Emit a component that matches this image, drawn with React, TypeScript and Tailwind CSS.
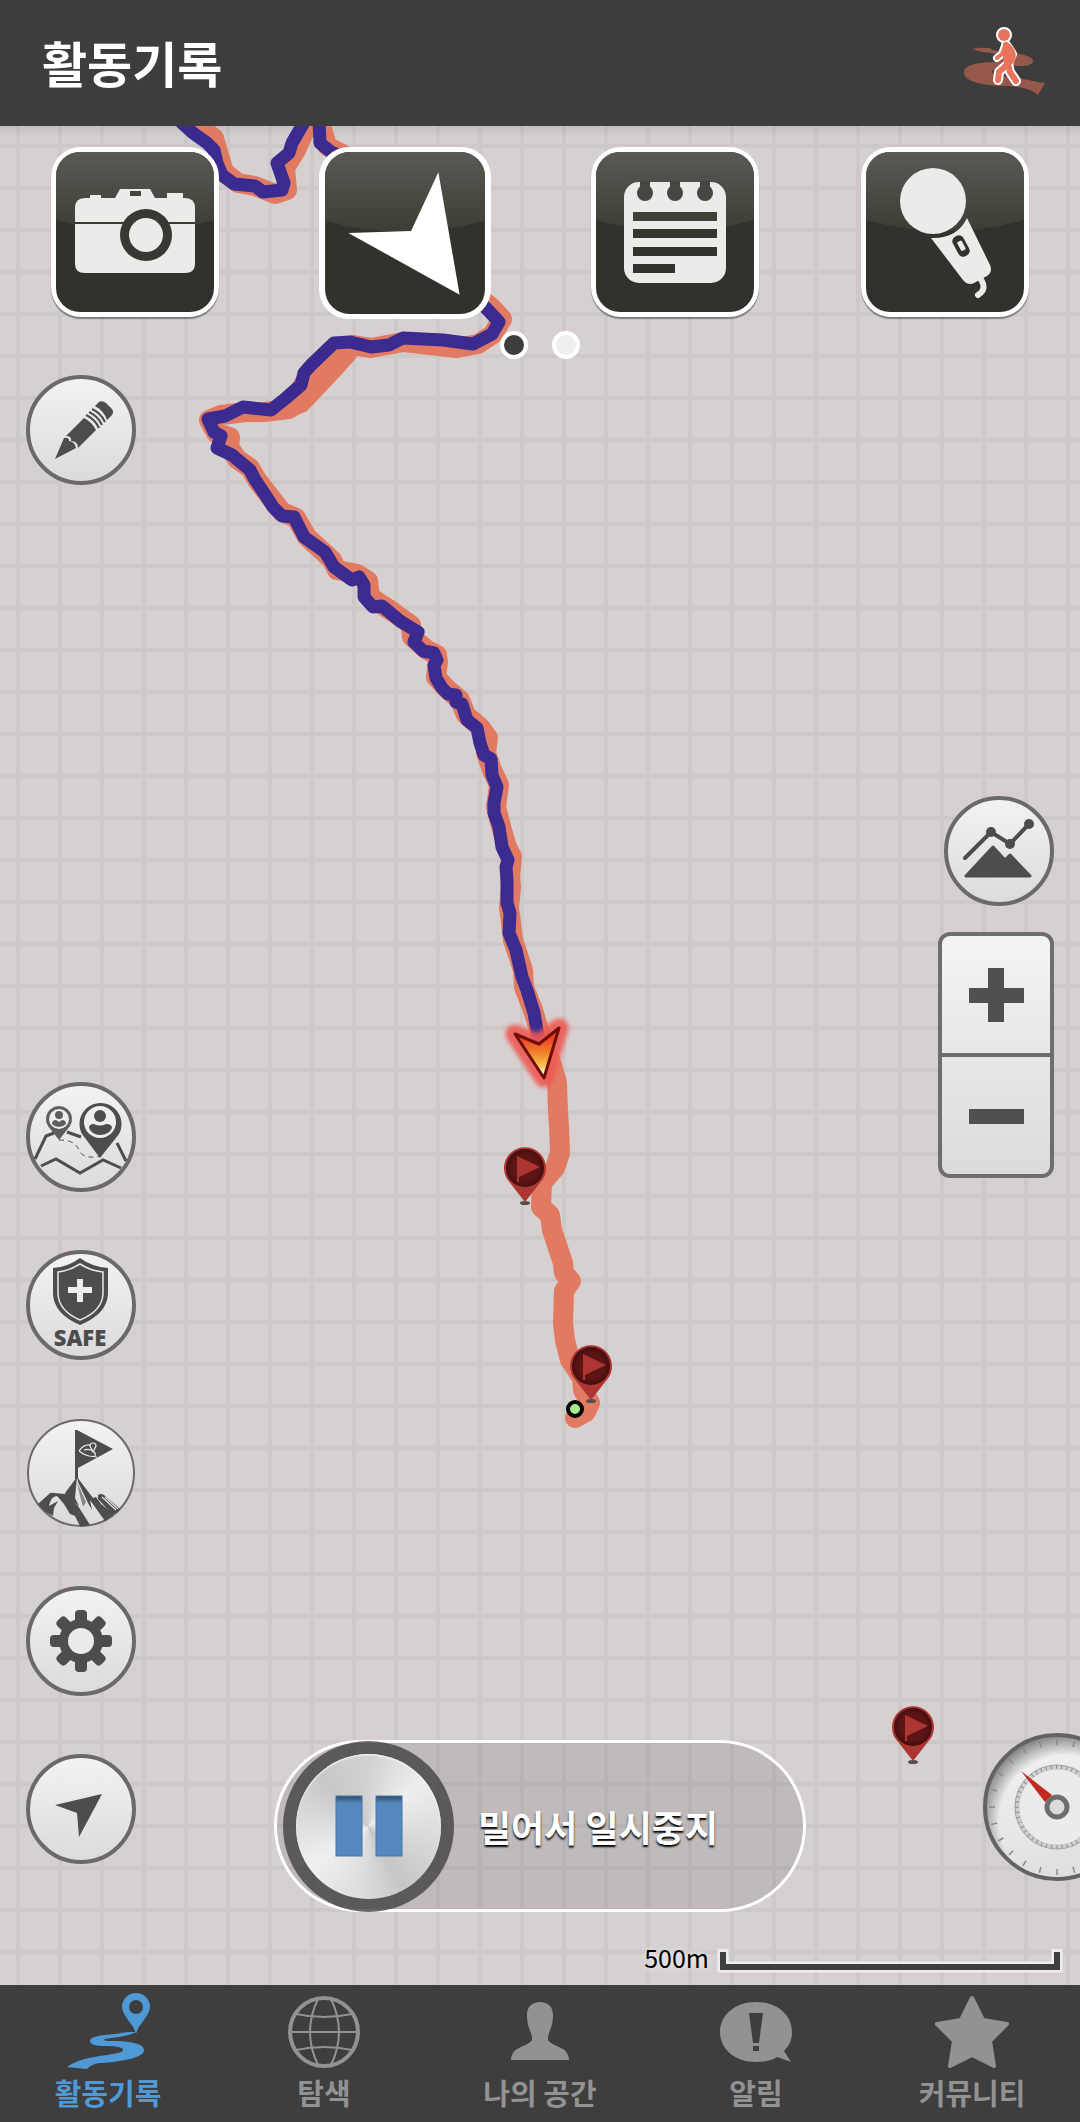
import type { ReactNode } from "react";

const ROUTE_TOP = "M195 124 L214 138 L218 152 L224 172 L238 183 L255 186 L275 194 L287 190 L285 168 L296 150 L305 130 L312 120 L321 125 L327 146 L344 155";
const ROUTE =
  "M470 290 L492 308 L502 319 L493 334 L478 344 L457 348 L403 342 L371 348 L352 345 L332 365 L303 398 L289 409 L264 412 L246 412 L221 415 L209 420 L216 433 L230 437 L229 447 L237 459 L250 468 L257 480 L275 503 L282 512 L296 518 L307 537 L332 560 L337 570 L357 574 L368 581 L370 597 L393 612 L411 625 L412 637 L427 650 L437 655 L438 662 L436 677 L447 689 L460 700 L466 715 L480 727 L488 738 L486 753 L492 770 L499 785 L496 807 L502 830 L507 847 L512 857 L510 877 L511 887 L509 907 L511 923 L513 940 L523 970 L524 987 L533 1010 L542 1040 L552 1065 L557 1083 L558 1110 L559 1127 L560 1153 L555 1168 L542 1183 L541 1207 L550 1215 L552 1230 L563 1263 L564 1273 L571 1281 L564 1291 L563 1323 L565 1340 L570 1360 L582 1378 L583 1390 L590 1403 L586 1412 L575 1418";
const TRACK_TOP = "M182 123 L193 133 L207 143 L214 150 L217 163 L222 175 L234 184 L255 186 L263 192 L282 190 L284 183 L277 163 L289 153 L292 143 L303 124";
const TRACK_MID = "M319 122 L320 143 L331 152 L346 158";
const TRACK =
  "M470 292 L486 308 L499 322 L492 334 L473 344 L443 340 L403 338 L389 345 L371 347 L350 342 L334 343 L311 365 L304 373 L301 385 L286 398 L271 410 L243 407 L225 416 L208 419 L214 432 L221 436 L217 448 L232 455 L250 470 L254 478 L264 493 L273 507 L282 516 L294 517 L304 537 L325 552 L334 567 L352 580 L359 577 L364 585 L364 597 L373 607 L382 606 L400 621 L418 632 L414 642 L423 651 L434 653 L437 660 L434 665 L436 678 L442 688 L448 694 L456 695 L456 702 L462 704 L467 720 L477 728 L480 743 L484 755 L491 759 L492 775 L497 787 L494 803 L494 813 L499 827 L502 847 L508 860 L506 867 L507 880 L507 903 L510 913 L509 933 L516 950 L522 977 L527 990 L534 1013 L538 1036";

const CHECKPOINTS = [
  { x: 525, y: 1168 },
  { x: 591, y: 1366 },
  { x: 913, y: 1727 },
];

function MapCanvas() {
  return (
    <svg className="absolute inset-0 h-full w-full" viewBox="0 126 1080 1859" preserveAspectRatio="xMidYMin slice" aria-hidden="true">
      <defs>
        <pattern id="grid" x="16" y="144" width="42" height="42" patternUnits="userSpaceOnUse">
          <rect width="4" height="42" fill="#cec8c8" />
          <rect width="42" height="4" fill="#cec8c8" />
        </pattern>
        <linearGradient id="arrow" x1="0" y1="0" x2="0" y2="1">
          <stop offset="0.2" stopColor="#ef4023" />
          <stop offset="0.55" stopColor="#f0902f" />
          <stop offset="0.78" stopColor="#f8cb5a" />
          <stop offset="0.9" stopColor="#ffffff" />
        </linearGradient>
        <radialGradient id="flag">
          <stop offset="0.7" stopColor="#5c1414" />
          <stop offset="1" stopColor="#430e0e" />
        </radialGradient>
        <linearGradient id="headerShade" x1="0" y1="0" x2="0" y2="1">
          <stop offset="0" stopColor="#000000" stopOpacity="0.08" />
          <stop offset="1" stopColor="#000000" stopOpacity="0" />
        </linearGradient>
        <filter id="glow" x="-50%" y="-50%" width="200%" height="200%">
          <feGaussianBlur stdDeviation="2" />
        </filter>
      </defs>
      <rect y="126" width="1080" height="1859" fill="#d6d0d0" />
      <rect y="126" width="1080" height="1859" fill="url(#grid)" />
      <rect y="126" width="1080" height="12" fill="url(#headerShade)" />

      <g fill="none" stroke="#e27a62" strokeWidth="20" strokeLinecap="round" strokeLinejoin="round">
        <path d={ROUTE_TOP} />
        <path d={ROUTE} />
      </g>
      <path d="M330 342 L357 357 L343 373 L307 411 L289 419 L282 398 L300 372z" fill="#e27a62" />
      <g fill="none" stroke="#3b2a90" strokeWidth="13" strokeLinecap="round" strokeLinejoin="round">
        <path d={TRACK_TOP} />
        <path d={TRACK_MID} />
        <path d={TRACK} />
      </g>

      <path
        d="M515 1034 L539 1044 L559 1028 L544 1078z"
        fill="#ee5a52"
        stroke="#ee5a52"
        strokeWidth="19"
        strokeLinejoin="round"
        opacity="0.9"
        filter="url(#glow)"
      />
      <path d="M515 1034 L539 1044 L559 1028 L544 1078z" fill="url(#arrow)" stroke="#6f0d0b" strokeWidth="3" strokeLinejoin="round" />

      {CHECKPOINTS.map((p) => (
        <g key={p.y} transform={`translate(${p.x} ${p.y})`}>
          <ellipse cx="0" cy="35" rx="5" ry="2" fill="#544d4d" />
          <path d="M0 34 L-18 11 A21 21 0 1 1 18 11z" fill="#ad3532" />
          <circle r="19" fill="url(#flag)" />
          <path d="M-8 -12 L15 -1 L-6 9 V14 H-8z" fill="#ad3532" />
        </g>
      ))}
      <circle cx="575" cy="1409" r="7" fill="#a5ec8b" stroke="#000000" strokeWidth="4" />
    </svg>
  );
}

function Tile({ label, selected, children }: { label: string; selected?: boolean; children: ReactNode }) {
  return (
    <button
      type="button"
      aria-label={label}
      className={
        selected
          ? "h-[172px] w-[172px] overflow-hidden rounded-[30px] bg-white"
          : "h-[170px] w-[168px] overflow-hidden rounded-[30px] bg-white shadow-[0_2px_1px_rgba(0,0,0,0.4)]"
      }
    >
      <svg className="h-full w-full" viewBox="0 0 168 170" aria-hidden="true">
        <defs>
          <linearGradient id="gloss" x1="0" y1="0" x2="0" y2="1">
            <stop offset="0" stopColor="#595a53" />
            <stop offset="1" stopColor="#3c3d35" />
          </linearGradient>
        </defs>
        <rect x="5" y="5" width="158" height="160" rx="24" fill="#31322b" />
        <path d="M5 73 V29 A24 24 0 0 1 29 5 H139 A24 24 0 0 1 163 29 V73 Q84 95 5 73z" fill="url(#gloss)" />
        {children}
      </svg>
    </button>
  );
}

function CameraTile() {
  return (
    <Tile label="사진">
      <path d="M34 51 H39 V48 H50 V51 H64 L69 42 H99 L104 51 H116 V46 H132 V51 H134 Q144 51 144 61 V117 Q144 126 134 126 H34 Q24 126 24 117 V61 Q24 51 34 51z" fill="#ebebe9" />
      <rect x="79" y="44" width="11" height="5" fill="#44453d" />
      <rect x="24" y="75" width="120" height="2" fill="#3b3c35" />
      <circle cx="95" cy="88" r="26" fill="#383932" />
      <circle cx="95" cy="88" r="17" fill="#ebebe9" />
    </Tile>
  );
}

function ArrowTile() {
  return (
    <Tile label="방향" selected>
      <path d="M117 25 L138 146 L28 85 L90 83z" fill="#ffffff" />
    </Tile>
  );
}

function NoteTile() {
  return (
    <Tile label="메모">
      <rect x="33" y="35" width="102" height="101" rx="15" fill="#ebebe9" />
      {[54, 84, 114].map((x) => (
        <g key={x} fill="#464740">
          <rect x={x - 5} y="34" width="10" height="10" />
          <circle cx={x} cy="46" r="8" />
        </g>
      ))}
      <rect x="42" y="65" width="84" height="9" fill="#3f4038" />
      <rect x="42" y="82" width="84" height="9" fill="#34352d" />
      <rect x="42" y="100" width="84" height="9" fill="#31322b" />
      <rect x="42" y="117" width="42" height="9" fill="#31322b" />
    </Tile>
  );
}

function MicTile() {
  return (
    <Tile label="음성">
      <circle cx="72" cy="54" r="33" fill="#ebebe9" />
      <path d="M106 71 L129 118 Q132 125 126 129 L113 136 Q107 139 102 133 L70 91 Q96 92 106 71z" fill="#ebebe9" />
      <g transform="translate(100 99) rotate(-28)">
        <rect x="-6" y="-11" width="12" height="22" rx="5" fill="#31322b" />
        <rect x="-2" y="-5" width="5" height="10" rx="1" fill="#ebebe9" />
      </g>
      <path d="M119 131 Q127 142 117 148" fill="none" stroke="#ebebe9" strokeWidth="6" strokeLinecap="round" />
    </Tile>
  );
}

function RoundButton({ label, thin, children }: { label: string; thin?: boolean; children: ReactNode }) {
  return (
    <button type="button" aria-label={label} className="size-[110px]">
      <svg className="h-full w-full" viewBox="0 0 110 110" fill="#4d4d4d" aria-hidden="true">
        <defs>
          <linearGradient id="face" x1="0" y1="0" x2="0" y2="1">
            <stop offset="0" stopColor="#f6f4f5" />
            <stop offset="1" stopColor="#dcdadb" />
          </linearGradient>
        </defs>
        <circle cx="55" cy="55" r="53" fill="url(#face)" fillOpacity="0.95" stroke="#6b6a6a" strokeWidth={thin ? 2 : 4} />
        {children}
      </svg>
    </button>
  );
}

function EditButton() {
  return (
    <RoundButton label="편집">
      <path d="M29 84 L38 63 Q43 62 43 66 Q49 67 50 73z" />
      <path d="M40 61 L58 43 Q66 47 70 55 L52 73 Q52 66 45 66 Q46 61 40 61z" />
      <g fill="none" stroke="#4d4d4d" strokeWidth="2">
        <path d="M60 40 Q69 44 73 53" />
        <path d="M63 37 Q72 41 76 50" />
        <path d="M66 34 Q75 38 79 47" />
      </g>
      <path d="M69 31 L73 27 Q76 25 80 28 L86 34 Q88 37 86 40 L81 45 Q78 36 69 31z" />
    </RoundButton>
  );
}

function FriendsButton() {
  return (
    <RoundButton label="친구 위치">
      <g fill="none" stroke="#4d4d4d" strokeWidth="3">
        <path d="M9 77 L20 54 L28 51" />
        <path d="M41 50 L55 55" />
        <path d="M91 61 L100 79" />
        <path d="M15 84 L30 77 L54 91 L77 78 L95 86" />
        <path d="M33 58 C46 58 50 62 53 68 C56 76 66 76 75 74" strokeWidth="1" strokeDasharray="5 4" />
      </g>
      <path d="M33 58 L22 44 A13 13 0 1 1 44 44z" fill="#5e5e5e" />
      <circle cx="33" cy="37" r="10" fill="#efedee" />
      <circle cx="33" cy="33" r="4" fill="#5e5e5e" />
      <path d="M26 42 Q26 38 30 38 L33 40 L36 38 Q40 38 40 42 Q37 45 33 45 Q29 45 26 42z" fill="#5e5e5e" />
      <path d="M74 76 L56 52 A21 21 0 1 1 93 52z" />
      <circle cx="74" cy="40" r="16" fill="#efedee" />
      <circle cx="74" cy="34" r="6" />
      <path d="M63 46 Q63 42 68 42 Q74 45 80 42 Q86 42 86 46 Q83 53 74 53 Q66 53 63 46z" />
    </RoundButton>
  );
}

function SafeButton() {
  return (
    <RoundButton label="SAFE">
      <path d="M54 8 Q66 17 82 18 V44 Q81 64 54 75 Q28 64 27 44 V18 Q42 17 54 8z" />
      <path d="M54 14 Q65 21 77 22 V44 Q76 61 54 70 Q33 61 32 44 V22 Q43 21 54 14z" fill="none" stroke="#e9e7e8" strokeWidth="1.5" />
      <path d="M51 29 H57 V37 H66 V43 H57 V52 H51 V43 H42 V37 H51z" fill="#efedee" />
      <text x="54" y="96" textAnchor="middle" fontSize="22" fontWeight="800" fontFamily="'Open Sans', 'Liberation Sans', sans-serif">
        SAFE
      </text>
    </RoundButton>
  );
}

function SummitButton() {
  return (
    <RoundButton label="정상 인증" thin>
      <path d="M49 12 H51 L87 31 L52 50 V61 H49z" />
      <g fill="none" stroke="#efedee" strokeWidth="1.2">
        <path d="M53 33 Q58 26 64 27 M53 33 Q58 37 63 38 L71 39 M58 32 Q64 30 68 34 Q70 35 69 38" />
        <path d="M67 34 L64 28 A3 3 0 1 1 70 28z" />
      </g>
      {/* ridges are drawn over the light face, so the snow stays uncovered */}
      <path d="M39 75 L51 59 L49 80 L53 88 L41 80z" />
      <path d="M51 59 L67 80 L70 79 L75 86 L88 96 Q84 100 79 103 L64 82 L66 92 L62 85 L52 64z" />
      <path d="M51 64 L54 78 L57 89 L60 84 L50 62z" fill="#8a8889" />
      <path d="M12 86 L22 77 Q24 74 28 75 L39 76 L52 88 L64 107 Q59 109 54 108 L49 98 L44 96 L38 86 L31 78 Q25 78 23 88 L32 83 L28 90 L27 98 Q17 93 12 86z" />
      <path d="M72 77 Q75 75 78 77 L94 91 L91 95 L86 96 L72 81z" />
      <path d="M76 79 L90 92 M79 79 L92 91" fill="none" stroke="#e5e3e4" strokeWidth="1.2" />
    </RoundButton>
  );
}

function SettingsButton() {
  return (
    <RoundButton label="설정">
      {[0, 45, 90, 135].map((deg) => (
        <rect key={deg} x="49" y="24" width="12" height="62" rx="4" transform={`rotate(${deg} 55 55)`} />
      ))}
      <circle cx="55" cy="55" r="22" />
      <circle cx="55" cy="55" r="13" fill="#ebe9ea" />
    </RoundButton>
  );
}

function LocateButton() {
  return (
    <RoundButton label="현재 위치">
      <path d="M76 40 L53 83 L51 59 L29 51z" />
    </RoundButton>
  );
}

function ElevationButton() {
  return (
    <RoundButton label="고도">
      <path d="M21 62 L47 36 L66 48 L85 28" fill="none" stroke="#4d4d4d" strokeWidth="4" strokeLinecap="round" />
      <circle cx="47" cy="36" r="5" />
      <circle cx="66" cy="48" r="5" />
      <circle cx="85" cy="28" r="5" />
      <path d="M22 80 L49 51 L61 64 L66 59 L86 80z" stroke="#4d4d4d" strokeWidth="3" strokeLinejoin="round" />
    </RoundButton>
  );
}

function ZoomControl() {
  return (
    <div className="flex w-[116px] flex-col overflow-hidden rounded-xl border-4 border-[#6f6e6e] bg-gradient-to-b from-[#f5f3f4] to-[#dcdadb]">
      <button type="button" aria-label="확대" className="flex h-[117px] items-center justify-center">
        <svg className="size-14" viewBox="0 0 56 56" fill="#505050" aria-hidden="true">
          <path d="M20 1 H36 V21 H56 V36 H36 V55 H20 V36 H1 V21 H20z" />
        </svg>
      </button>
      <button type="button" aria-label="축소" className="flex h-[121px] items-center justify-center border-t-4 border-[#6f6e6e]">
        <svg className="size-14" viewBox="0 0 56 56" fill="#505050" aria-hidden="true">
          <rect x="1" y="21" width="55" height="15" />
        </svg>
      </button>
    </div>
  );
}

function Gauge() {
  return (
    <svg className="-mr-[51px] size-[148px] shrink-0" viewBox="-74 -74 148 148" role="img" aria-label="나침반">
      <defs>
        <linearGradient id="dial" x1="0.3" y1="0" x2="0.6" y2="1">
          <stop offset="0" stopColor="#f3f2f3" />
          <stop offset="1" stopColor="#e0dedf" />
        </linearGradient>
        <radialGradient id="dialShade" cx="0.56" cy="0.6" r="0.62">
          <stop offset="0.74" stopColor="#000000" stopOpacity="0" />
          <stop offset="1" stopColor="#000000" stopOpacity="0.5" />
        </radialGradient>
      </defs>
      <circle r="72" fill="url(#dial)" />
      <circle r="72" fill="url(#dialShade)" stroke="#646363" strokeWidth="4" />
      {Array.from({ length: 24 }, (_, i) => (
        <path key={i} d="M0 -68 V-62" stroke="#8a8989" strokeWidth="1.5" transform={`rotate(${i * 15})`} />
      ))}
      <circle r="40" fill="#ecebec" stroke="#cfcfcd" strokeWidth="5" />
      <circle r="42" fill="none" stroke="#a9a9a8" strokeWidth="1" />
      <circle r="40" fill="none" stroke="#8d8d8c" strokeWidth="4" strokeDasharray="1 4.2" />
      <path d="M-36 -36 L-5 -12 L-12 -5z" fill="#c22a20" />
      <circle r="10" fill="#dadcd5" stroke="#6e6e6d" strokeWidth="5" />
    </svg>
  );
}

function SlideToPause() {
  return (
    <div className="flex h-[172px] w-[532px] items-center rounded-full border-[3px] border-white bg-black/10 pl-[6px]">
      <button
        type="button"
        aria-label="일시중지"
        className="-my-[3px] flex size-[171px] shrink-0 items-center justify-center rounded-full bg-[#3a3838]/75"
      >
        <span className="flex size-[145px] items-center justify-center rounded-full bg-[conic-gradient(#d2d2d2,#eeeeee_50deg,#dedede_90deg,#c6c6c6_150deg,#dadada_180deg,#f0f0f0_235deg,#dcdcdc_275deg,#c8c8c8_315deg,#d2d2d2)] shadow-[inset_0_1px_2px_#ffffff]">
          <svg className="h-[62px] w-[68px]" viewBox="0 0 68 62" aria-hidden="true">
            <defs>
              <linearGradient id="bar" x1="0" y1="0" x2="0" y2="1">
                <stop offset="0" stopColor="#2e4a66" />
                <stop offset="0.12" stopColor="#5588be" />
              </linearGradient>
            </defs>
            <rect x="1" y="1" width="26" height="60" fill="url(#bar)" stroke="#4677a6" />
            <rect x="41" y="1" width="26" height="60" fill="url(#bar)" stroke="#4677a6" />
          </svg>
        </span>
      </button>
      <span className="ml-6 text-[36px] font-bold leading-[48px] whitespace-nowrap text-white [text-shadow:0_2px_2px_#000000]">밀어서 일시중지</span>
    </div>
  );
}

function ScaleBar() {
  return (
    <div className="flex h-[73px] items-center justify-end gap-2 pt-4 pr-[17px]">
      <span className="text-[25px] leading-8 text-black [text-shadow:0_0_6px_#ffffff]">500m</span>
      <svg className="mt-2 h-6 w-[346px]" viewBox="0 0 346 24" fill="none" aria-hidden="true">
        <path d="M6 3 V18 H340 V3" stroke="#eeecec" strokeWidth="11" strokeLinecap="square" />
        <path d="M6 3 V18 H340 V3" stroke="#3f3f3f" strokeWidth="6" />
      </svg>
    </div>
  );
}

function WalkIcon() {
  return (
    <svg className="h-[72px] w-[84px]" viewBox="0 0 84 72" aria-hidden="true">
      <path
        d="M10 23 C16 21 22 22 27 22 C28 24 31 24 35 25 C58 27 70 30 70 35 C70 40 60 40 54 40 C45 40 32 41 28 46 C34 51 48 50 60 53 C68 54 76 57 82 57 L75 69 C66 61 52 60 38 60 C16 59 1 55 1 46 C1 39 16 36 33 36 L33 28 C25 26 14 26 10 23z"
        fill="#95594b"
      />
      <g fill="none" stroke="#ffffff" strokeWidth="10" strokeLinecap="round" strokeLinejoin="round">
        <circle cx="41" cy="9" r="3" />
        <path d="M42 20 L39 28 L34 32" strokeWidth="8" />
        <path d="M43 19 L49 28 L45 38 L36 46 L35 54" />
        <path d="M45 38 L47 46 L53 55" />
      </g>
      <g stroke="#e8755b" strokeWidth="6" strokeLinecap="round" strokeLinejoin="round" fill="none">
        <path d="M42 20 L39 28 L34 32" strokeWidth="4" />
        <path d="M43 19 L49 28 L45 38 L36 46 L35 54" />
        <path d="M45 38 L47 46 L53 55" />
      </g>
      <path d="M40 17 Q43 15 47 18 Q55 26 52 34 Q50 40 41 40 L40 30z" fill="#e8755b" />
      <circle cx="41" cy="9" r="6" fill="#e8755b" />
    </svg>
  );
}

const NAV_ITEMS = [
  {
    label: "활동기록",
    active: true,
    icon: (
      <>
        <path fillRule="evenodd" d="M78 44 C76 34 64 26 64 17 A14 14 0 0 1 92 17 C92 26 80 34 78 44z M78 10 A7 7 0 1 0 78 24 A7 7 0 1 0 78 10z" />
        <path d="M78 42 C64 42 66 43 57 44 C42 45 32 47 32 51 C32 55 39 56 46 56 C58 56 65 57 65 60 C65 63 58 63 50 65 C30 67 17 71 9 77 L29 79 C34 74 38 73 45 73 C68 71 86 67 86 60 C86 54 74 52 62 51 C50 51 46 51 46 50 C46 48 58 48 66 46 C71 45 74 44 78 42z" />
      </>
    ),
  },
  {
    label: "탐색",
    icon: (
      <g fill="none" stroke="currentColor" strokeWidth="2">
        <circle cx="50" cy="42" r="34" strokeWidth="4" />
        <path d="M17 42 H83" />
        <path d="M22 24 Q50 30 78 24 M22 60 Q50 54 78 60" />
        <path d="M44 9 Q28 42 44 75 M57 9 Q73 42 57 75" />
      </g>
    ),
  },
  {
    label: "나의 공간",
    icon: <path d="M50 12 C58 12 63 17 63 25 C63 39 58 41 58 49 C58 53 66 55 71 58 C76 60 79 65 79 70 H21 C21 65 24 60 29 58 C34 55 42 53 42 49 C42 41 37 39 37 25 C37 17 42 12 50 12z" />,
  },
  {
    label: "알림",
    icon: (
      <path
        fillRule="evenodd"
        d="M50 12 C71 12 86 25 86 42 C86 50 83 56 78 61 L85 72 L71 67 C65 71 58 72 50 72 C29 72 14 59 14 42 C14 25 29 12 50 12z M43 23 L47 53 H53 L57 23z M47 56 V61 H53 V56z"
      />
    ),
  },
  {
    label: "커뮤니티",
    icon: (
      <path d="M50 8 L61 30 L85 34 L68 51 L72 76 L50 65 L28 76 L32 51 L15 34 L39 30z" stroke="currentColor" strokeWidth="4" strokeLinejoin="round" />
    ),
  },
];

function BottomNav() {
  return (
    <nav className="grid grid-cols-5 bg-[#3e3e3e] pt-[5px] pb-2">
      {NAV_ITEMS.map((item) => (
        <a
          key={item.label}
          href="#"
          aria-current={item.active ? "page" : undefined}
          className={item.active ? "flex flex-col items-center text-[#4f9ad6]" : "flex flex-col items-center text-[#929292]"}
        >
          <svg className="h-20 w-[100px]" viewBox="0 0 100 80" fill="currentColor" aria-hidden="true">
            {item.icon}
          </svg>
          <span className="text-[29px] font-bold leading-[44px] whitespace-nowrap">{item.label}</span>
        </a>
      ))}
    </nav>
  );
}

export default function App() {
  return (
    <div className="flex min-h-screen flex-col font-['Noto_Sans_CJK_KR','Noto_Sans',sans-serif]">
      {/* HEADER */}
      <header className="flex h-[126px] items-center justify-between bg-[#3d3d3d] pr-[33px] pb-[2px] pl-[42px]">
        <h1 className="text-[49px] font-bold leading-[64px] text-white">활동기록</h1>
        <button type="button" aria-label="걷기">
          <WalkIcon />
        </button>
      </header>

      {/* MAP */}
      <main className="relative flex flex-1 flex-col overflow-hidden">
        <MapCanvas />

        <div className="relative grid grid-cols-4 justify-items-center pt-[21px]">
          <CameraTile />
          <ArrowTile />
          <NoteTile />
          <MicTile />
        </div>

        <div className="relative mt-3 flex justify-center gap-6">
          <span className="size-7 rounded-full border-4 border-white bg-[#3d3d3d]" />
          <span className="size-7 rounded-full border-4 border-white bg-[#efefed]" />
        </div>

        <div className="relative mt-4 flex flex-1">
          <div className="flex w-40 flex-col justify-between pb-12 pl-[26px]">
            <EditButton />
            <div className="flex flex-col gap-[58px]">
              <FriendsButton />
              <SafeButton />
              <SummitButton />
              <SettingsButton />
              <LocateButton />
            </div>
          </div>

          <div className="flex flex-1 flex-col items-center justify-end">
            <SlideToPause />
          </div>

          <div className="flex w-40 flex-col items-end justify-between pt-[421px] pb-[31px]">
            <div className="flex flex-col items-end gap-[26px] pr-[26px]">
              <ElevationButton />
              <ZoomControl />
            </div>
            <Gauge />
          </div>
        </div>

        <div className="relative">
          <ScaleBar />
        </div>
      </main>

      {/* NAVIGATION */}
      <BottomNav />
    </div>
  );
}
